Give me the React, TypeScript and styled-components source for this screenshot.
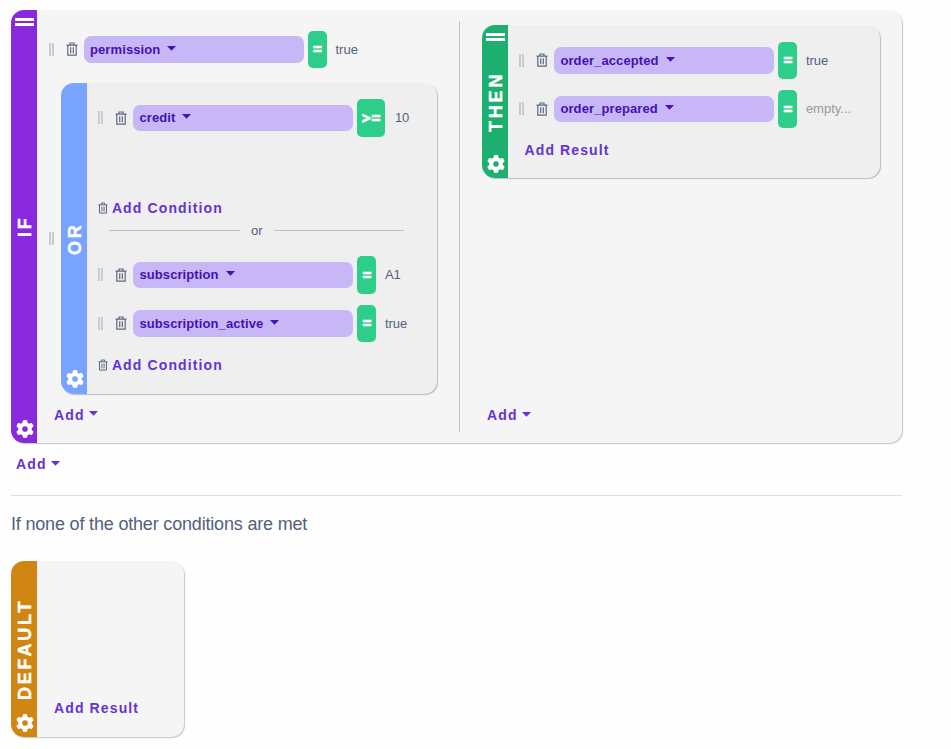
import React from "react";
import styled, { createGlobalStyle } from "styled-components";
import { FaGear } from "react-icons/fa6";

const GlobalStyle = createGlobalStyle`
  * { box-sizing: border-box; }
  body {
    margin: 0;
    background: #fefefe;
    color: #525f7f;
    font-family: "Liberation Sans", Arial, sans-serif;
    font-size: 13px;
  }
`;

const Page = styled.main`
  display: flex;
  flex-direction: column;
  align-items: flex-start;
  padding: 10px 0 0 11px;
  height: 749px;
  overflow: hidden;
`;

const Card = styled.section<{ $w: number; $h: number; $nested?: boolean }>`
  display: flex;
  flex: none;
  width: ${(p) => p.$w}px;
  height: ${(p) => p.$h}px;
  overflow: hidden;
  border-radius: 13px;
  background: ${(p) => (p.$nested ? "#efefef" : "#f5f5f5")};
  box-shadow: 1px 1px 1px ${(p) => (p.$nested ? "#bdbdbd" : "#c8c8c8")};
`;

const Bar = styled.div<{ $color: string }>`
  display: flex;
  flex: none;
  flex-direction: column;
  align-items: center;
  width: 26px;
  background: ${(p) => p.$color};
  color: #fff;
`;

const BarSlot = styled.div<{ $end?: boolean }>`
  display: flex;
  flex: none;
  align-items: ${(p) => (p.$end ? "flex-end" : "flex-start")};
  height: 25px;
  padding: ${(p) => (p.$end ? "0 0 5.5px 1px" : "8px 0 0")};
`;

const BarLines = styled.span`
  width: 19px;
  height: 8px;
  margin-left: 1px;
  border: solid #fff;
  border-width: 3px 0;
`;

const BarLabel = styled.div`
  display: flex;
  flex: 1;
  align-items: center;
  justify-content: center;
  margin-left: 3px;
  writing-mode: vertical-rl;
  transform: rotate(180deg);
  font-size: 18px;
  font-weight: bold;
  letter-spacing: 2.8px;
  line-height: 23px;
  white-space: nowrap;
  -webkit-text-stroke: 0.4px #fff;
`;

const Content = styled.div<{ $top: number; $left?: number }>`
  display: flex;
  flex-direction: column;
  flex: 1;
  align-items: flex-start;
  padding: ${(p) => p.$top}px 0 0 ${(p) => p.$left ?? 12}px;
`;

const Half = styled.div<{ $w: number; $pad: string }>`
  display: flex;
  flex-direction: column;
  flex: none;
  align-items: flex-start;
  width: ${(p) => p.$w}px;
  padding: ${(p) => p.$pad};
`;

const Divider = styled.div`
  flex: none;
  width: 1px;
  margin: 11px 0;
  background: #c4c4c4;
`;

const RowBox = styled.div<{ $gap?: number }>`
  display: flex;
  align-items: center;
  height: 37.5px;
  margin-bottom: ${(p) => p.$gap ?? 0}px;
`;

const NestedRow = styled.div`
  display: flex;
  align-items: center;
  gap: 7px;
`;

const Grip = styled.span`
  flex: none;
  width: 5px;
  height: 13px;
  border: solid #cbcbcb;
  border-width: 0 2px;
`;

const TrashSvg = styled.svg<{ $small?: boolean }>`
  flex: none;
  width: ${(p) => (p.$small ? 10 : 12)}px;
  height: ${(p) => (p.$small ? 12 : 14)}px;
  fill: none;
  stroke: #5c6880;
  stroke-width: 1.2;
`;

const RowTrash = styled.span`
  display: flex;
  margin: 0 5.5px 0 12px;
`;

const Pill = styled.button`
  display: flex;
  align-items: center;
  gap: 7px;
  width: 220px;
  height: 26.5px;
  padding: 0 6.5px;
  border: 0;
  border-radius: 7px;
  background: #c8b7f6;
  color: #4312b4;
  font: bold 13px "Liberation Sans", Arial, sans-serif;
  letter-spacing: 0.1px;
`;

const CaretSvg = styled.svg`
  flex: none;
  width: 9px;
  height: 5px;
  margin-bottom: 2px;
  fill: currentColor;
`;

const Operator = styled.button<{ $wide?: boolean }>`
  width: ${(p) => (p.$wide ? 27.5 : 19)}px;
  height: 37.5px;
  margin: 0 ${(p) => (p.$wide ? 10 : 8.5)}px 0 4.5px;
  padding: 0;
  border: 0;
  border-radius: 5px;
  background: #2dce89;
  color: #fff;
  font: 800 16px "Open Sans", sans-serif;
  -webkit-text-stroke: 0.5px #fff;
`;

const Value = styled.span<{ $empty?: boolean }>`
  color: ${(p) => (p.$empty ? "#999" : "#525f7f")};
`;

const ActionButton = styled.button<{ $m: string }>`
  display: flex;
  align-items: center;
  gap: 4px;
  height: 18px;
  margin: ${(p) => p.$m};
  padding: 0;
  border: 0;
  background: none;
  color: #6533d2;
  font: bold 14px/18px "Liberation Sans", Arial, sans-serif;
  letter-spacing: 1.12px;
`;

const OrDivider = styled.div`
  display: flex;
  align-items: center;
  gap: 11px;
  width: 295px;
  height: 16px;
  margin: 6px 0 17.5px 11px;

  &::before,
  &::after {
    content: "";
    flex: 1;
    height: 1px;
    background: #bcc2c2;
  }
`;

const PageRule = styled.div`
  width: 891px;
  height: 1px;
  background: #dfdfdf;
`;

const Heading = styled.h2`
  height: 24px;
  margin: 16px 0 25px;
  font-size: 18px;
  font-weight: normal;
  letter-spacing: -0.18px;
  line-height: 24px;
`;

function DownCaret() {
  return (
    <CaretSvg viewBox="0 0 9 5">
      <path d="M0 0h9L4.5 4.8z" />
    </CaretSvg>
  );
}

function Trash({ small }: { small?: boolean }) {
  return (
    <TrashSvg $small={small} viewBox="0 0 12 14">
      <path d="M.5 3.2h11M4 3V1h4v2M1.8 3.2v9.9h8.4V3.2M4.7 5.3v5.9M7.3 5.3v5.9" />
    </TrashSvg>
  );
}

function SideBar({ label, color, lines }: { label: string; color: string; lines?: boolean }) {
  return (
    <Bar $color={color}>
      <BarSlot>{lines && <BarLines />}</BarSlot>
      <BarLabel>{label}</BarLabel>
      <BarSlot $end>
        <FaGear size={18} />
      </BarSlot>
    </Bar>
  );
}

interface RuleProps {
  name: string;
  op?: string;
  value?: string;
  gap?: number;
}

function Rule({ name, op = "=", value, gap }: RuleProps) {
  return (
    <RowBox $gap={gap}>
      <Grip />
      <RowTrash>
        <Trash />
      </RowTrash>
      <Pill>
        {name}
        <DownCaret />
      </Pill>
      <Operator $wide={op.length > 1}>{op}</Operator>
      <Value $empty={!value}>{value ?? "empty..."}</Value>
    </RowBox>
  );
}

export default function App() {
  return (
    <>
      <GlobalStyle />
      <Page>
        <Card $w={891} $h={433}>
          <SideBar label="IF" color="#8929dd" lines />
          <Half $w={422} $pad="20.5px 0 0 12px">
            <Rule name="permission" value="true" gap={14.5} />
            <NestedRow>
              <Grip />
              <Card $w={376} $h={311} $nested>
                <SideBar label="OR" color="#78a3ff" />
                <Content $top={16.5} $left={11.4}>
                  <Rule name="credit" op=">=" value="10" />
                  <ActionButton $m="62px 0 0 -0.5px">
                    <Trash small />
                    Add Condition
                  </ActionButton>
                  <OrDivider>or</OrDivider>
                  <Rule name="subscription" value="A1" gap={11} />
                  <Rule name="subscription_active" value="true" />
                  <ActionButton $m="13.5px 0 0 -0.5px">
                    <Trash small />
                    Add Condition
                  </ActionButton>
                </Content>
              </Card>
            </NestedRow>
            <ActionButton $m="12px 0 0 5px">
              Add
              <DownCaret />
            </ActionButton>
          </Half>
          <Divider />
          <Half $w={442} $pad="15px 0 0 22px">
            <Card $w={398} $h={153} $nested>
              <SideBar label="THEN" color="#1caf70" lines />
              <Content $top={16.5} $left={11.4}>
                <Rule name="order_accepted" value="true" gap={11} />
                <Rule name="order_prepared" />
                <ActionButton $m="13.5px 0 0 5.1px">Add Result</ActionButton>
              </Content>
            </Card>
            <ActionButton $m="228px 0 0 5px">
              Add
              <DownCaret />
            </ActionButton>
          </Half>
        </Card>
        <ActionButton $m="12px 0 22px 5px">
          Add
          <DownCaret />
        </ActionButton>
        <PageRule />
        <Heading>If none of the other conditions are met</Heading>
        <Card $w={173} $h={176}>
          <SideBar label="DEFAULT" color="#d18613" />
          <Content $top={138}>
            <ActionButton $m="0 0 0 5px">Add Result</ActionButton>
          </Content>
        </Card>
      </Page>
    </>
  );
}
